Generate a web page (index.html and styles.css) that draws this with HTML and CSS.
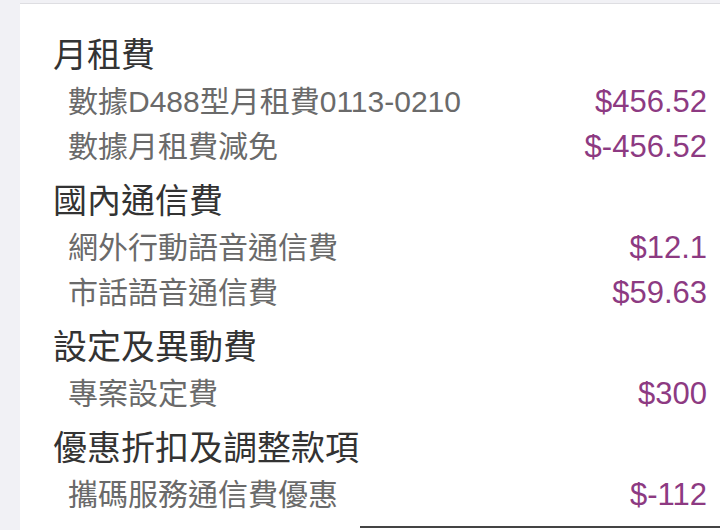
FILE: index.html
```html
<!DOCTYPE html>
<html lang="zh-Hant">
<head>
<meta charset="utf-8">
<title>帳單明細</title>
<link rel="stylesheet" href="styles.css">
</head>
<body>
<div class="page">
  <div class="side"></div>
  <main class="card">
    <section class="group">
      <h2 class="group-title">月租費</h2>
      <div class="row"><span class="label">數據D488型月租費0113-0210</span><span class="amount">$456.52</span></div>
      <div class="row"><span class="label">數據月租費減免</span><span class="amount">$-456.52</span></div>
    </section>
    <section class="group">
      <h2 class="group-title">國內通信費</h2>
      <div class="row"><span class="label">網外行動語音通信費</span><span class="amount">$12.1</span></div>
      <div class="row"><span class="label">市話語音通信費</span><span class="amount">$59.63</span></div>
    </section>
    <section class="group">
      <h2 class="group-title">設定及異動費</h2>
      <div class="row"><span class="label">專案設定費</span><span class="amount">$300</span></div>
    </section>
    <section class="group">
      <h2 class="group-title">優惠折扣及調整款項</h2>
      <div class="row"><span class="label">攜碼服務通信費優惠</span><span class="amount">$-112</span></div>
    </section>
    <div class="bottom-bar"><span class="bar-line"></span></div>
  </main>
</div>
</body>
</html>
```
FILE: styles.css
```css
* { box-sizing: border-box; }
html, body { margin: 0; padding: 0; }
body {
  width: 720px;
  height: 530px;
  overflow: hidden;
  background: #f1f1f5;
  font-family: "Liberation Sans", "Noto Sans CJK TC", sans-serif;
}
.page {
  display: flex;
  height: 530px;
  padding-top: 3px;
}
.side {
  width: 20px;
  flex: none;
}
.card {
  flex: 1;
  background: #fff;
  border-top: 1px solid #dedee2;
  padding: 28px 13px 0 33px;
  display: flex;
  flex-direction: column;
}
.group + .group { margin-top: 9px; }
.group-title {
  margin: 0;
  font-weight: normal;
  font-size: 34px;
  line-height: 47px;
  color: #333;
}
.row {
  display: flex;
  justify-content: space-between;
  align-items: center;
  height: 45px;
  padding-left: 15px;
}
.label {
  font-size: 30px;
  color: #6a6a6a;
  padding-bottom: 5px;
}
.amount {
  font-size: 31px;
  color: #8d3a82;
}
.bottom-bar {
  margin-top: auto;
  display: flex;
  justify-content: flex-end;
  margin-right: -13px;
  height: 4px;
}
.bar-line {
  width: 360px;
  height: 2px;
  background: #444;
}
```
